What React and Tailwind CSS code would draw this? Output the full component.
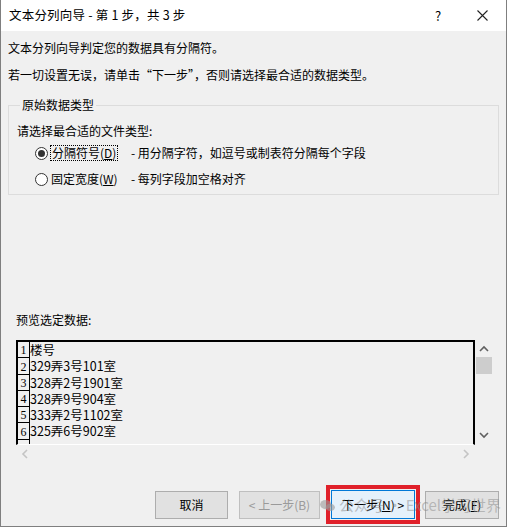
import { useState } from 'react';

const font = { fontFamily: '"Noto Sans CJK SC", "Noto Sans", sans-serif' };

const rows = ['楼号', '329弄3号101室', '328弄2号1901室', '328弄9号904室', '333弄2号1102室', '325弄6号902室', ''];

function Radio({ checked, onClick }) {
  return (
    <span
      onClick={onClick}
      className="w-[13px] h-[13px] rounded-full border border-[#333333] bg-white flex items-center justify-center shrink-0"
    >
      {checked && <span className="w-[7px] h-[7px] rounded-full bg-[#333333]" />}
    </span>
  );
}

function Chevron({ dir, color }) {
  const d = {
    up: 'M1 6 L5 2 L9 6',
    down: 'M1 2 L5 6 L9 2',
    left: 'M6 1 L2 5 L6 9',
    right: 'M2 1 L6 5 L2 9',
  }[dir];
  const vertical = dir === 'up' || dir === 'down';
  return (
    <svg width={vertical ? 10 : 8} height={vertical ? 8 : 10} viewBox={vertical ? '0 0 10 8' : '0 0 8 10'}>
      <path d={d} fill="none" stroke={color} strokeWidth="1.6" />
    </svg>
  );
}

export default function App() {
  const [mode, setMode] = useState('delim');

  return (
    <div
      className="w-[507px] h-[527px] bg-[#f0f0f0] border-x border-b border-[#7f7f7f] flex flex-col text-[12px] text-black relative overflow-hidden"
      style={font}
    >
      {/* Title bar */}
      <div className="h-[31px] bg-white flex items-center shrink-0">
        <span className="pl-[8px] text-[12.5px] tracking-[0.2px]">文本分列向导 - 第 1 步，共 3 步</span>
        <span className="ml-auto w-[20px] text-center text-[13px] mr-[26px]">?</span>
        <span className="w-[16px] flex justify-center mr-[16px]">
          <svg width="11" height="11" viewBox="0 0 11 11">
            <path d="M0.5 0.5 L10.5 10.5 M10.5 0.5 L0.5 10.5" stroke="#222" strokeWidth="1.1" />
          </svg>
        </span>
      </div>

      <div className="pl-[7px] pr-[7px] flex flex-col">
        <p className="mt-[9px] leading-[16px]">文本分列向导判定您的数据具有分隔符。</p>
        <p className="mt-[11px] leading-[16px]">若一切设置无误，请单击“下一步”，否则请选择最合适的数据类型。</p>

        {/* Group box */}
        <fieldset className="mt-[14px] border border-[#dcdcdc] w-[491px] pl-[7px] pb-[7px]">
          <legend className="ml-[4px] px-[2px] leading-[16px]">原始数据类型</legend>
          <p className="mt-[10px] leading-[16px] ml-[1px]">请选择最合适的文件类型:</p>
          <div className="mt-[6px] flex items-center h-[16px] pl-[19px]">
            <Radio checked={mode === 'delim'} onClick={() => setMode('delim')} />
            <span className="ml-[2px] w-[80px]">
              <span className="border border-dotted border-black px-[1px] leading-[14px] inline-block">
                分隔符号(<span className="underline">D</span>)
              </span>
            </span>
            <span className="ml-[1px]">- 用分隔字符，如逗号或制表符分隔每个字段</span>
          </div>
          <div className="mt-[10px] flex items-center h-[16px] pl-[19px]">
            <Radio checked={mode === 'fixed'} onClick={() => setMode('fixed')} />
            <span className="ml-[3px] w-[80px]">
              固定宽度(<span className="underline">W</span>)
            </span>
            <span>- 每列字段加空格对齐</span>
          </div>
        </fieldset>

        <p className="mt-[117px] leading-[16px] ml-[8px]">预览选定数据:</p>

        {/* Preview */}
        <div className="mt-[12px] ml-[8px] flex">
          <div className="w-[459px] flex flex-col">
            <div className="h-[105px] border-t-2 border-x-2 border-b border-t-black border-x-black border-b-white overflow-hidden bg-[#f0f0f0]">
              {rows.map((r, i) => (
                <div key={i} className="flex h-[16.3px]">
                  <div
                    className="w-[12px] border-r border-b border-black flex items-end justify-center text-[12px] leading-[14px]"
                    style={{ fontFamily: '"Liberation Serif", serif' }}
                  >
                    {r ? i + 1 : ''}
                  </div>
                  <div className="leading-[16px] text-[12.5px]">{r}</div>
                </div>
              ))}
            </div>
            <div className="h-[17px] flex items-center justify-between px-[5px]">
              <Chevron dir="left" color="#c4c4c4" />
              <Chevron dir="right" color="#c4c4c4" />
            </div>
          </div>
          <div className="w-[17px] h-[105px] flex flex-col items-center">
            <div className="h-[17px] flex items-center justify-center">
              <Chevron dir="up" color="#606060" />
            </div>
            <div className="w-[16px] h-[17px] bg-[#cdcdcd]" />
            <div className="flex-1" />
            <div className="h-[17px] flex items-center justify-center mb-[2px]">
              <Chevron dir="down" color="#606060" />
            </div>
          </div>
        </div>

        {/* Buttons */}
        <div className="mt-[23px] flex items-center">
          <button className="ml-[147px] w-[73px] h-[28px] bg-[#e1e1e1] border border-[#adadad]">取消</button>
          <button className="ml-[11px] w-[81px] h-[28px] bg-[#e1e1e1] border border-[#bfbfbf] text-[#9a9a9a]" disabled>
            &lt; 上一步(B)
          </button>
          <div className="ml-[6px] border-[4px] border-[#e0202a] p-px">
            <button className="w-[84px] h-[29px] bg-[#e5f1fb] border border-[#0078d7]">
              下一步(<span className="underline">N</span>) &gt;
            </button>
          </div>
          <button className="ml-[5px] w-[74px] h-[28px] bg-[#e1e1e1] border border-[#adadad]">
            完成(<span className="underline">F</span>)
          </button>
        </div>
      </div>

      {/* Watermark overlay */}
      <div className="absolute left-[319px] top-[494px] flex items-center gap-[4px] text-[15px] text-[#8a8a8a]/50 whitespace-nowrap pointer-events-none">
        <svg width="15" height="13" viewBox="0 0 16 14">
          <ellipse cx="6" cy="6" rx="6" ry="5" fill="#9a9a9a" fillOpacity="0.6" />
          <ellipse cx="11" cy="9" rx="5" ry="4" fill="#9a9a9a" fillOpacity="0.6" />
        </svg>
        <span>公众号 · Excel学习世界</span>
      </div>
    </div>
  );
}
